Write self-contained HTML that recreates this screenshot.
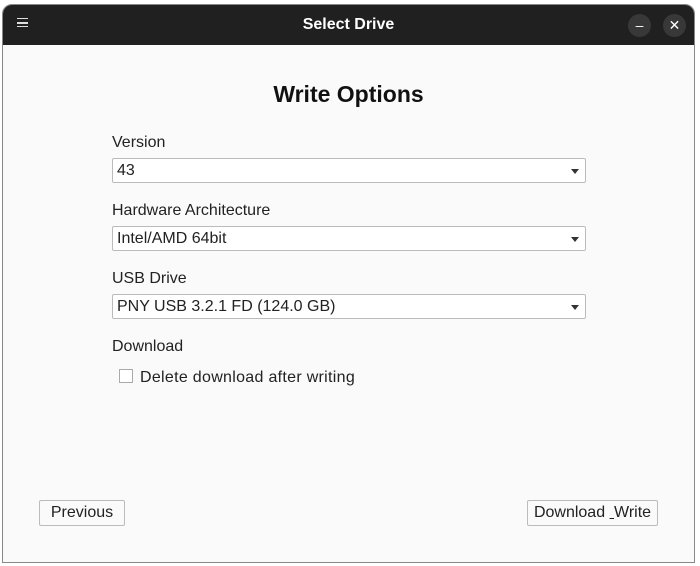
<!DOCTYPE html>
<html><head><style>
body{margin:0;width:700px;height:566px;background:#fff;font-family:"Liberation Sans",sans-serif;position:relative;overflow:hidden}
.win{position:absolute;left:2px;top:4px;width:693px;height:559px;border:1px solid #888;border-radius:10px 10px 0 0;background:#fafafa;box-sizing:border-box;overflow:hidden}
.tb{position:absolute;left:0;top:0;right:0;height:40px;background:#202020;color:#fff}
.t{position:absolute;width:100%;text-align:center;top:11px;font-size:16px;font-weight:bold}
.cb{position:absolute;top:9px;width:23px;height:23px;border-radius:50%;background:#383838;color:#fff;text-align:center;font-size:14px;line-height:23px}
.a{position:absolute;font-size:16px;color:#222}
.combo{position:absolute;left:109px;width:474px;height:25px;border:1px solid #bbb;border-radius:2px;background:#fff;box-sizing:border-box;font-size:16px;line-height:23px;padding-left:4px;color:#222}
.combo:after{content:"";position:absolute;right:6px;top:10px;border-left:4px solid transparent;border-right:4px solid transparent;border-top:5px solid #333}
.btn{position:absolute;height:26px;border:1px solid #bbb;border-radius:2px;background:#fafafa;box-sizing:border-box;font-size:16px;line-height:24px;text-align:center;color:#222}
</style></head><body>
<div class="win">
<div class="tb">
<div style="position:absolute;left:14px;top:13px;width:11px;height:9px;border-top:1.5px solid #ddd;border-bottom:1.5px solid #ddd;box-sizing:border-box"></div>
<div style="position:absolute;left:14px;top:17px;width:11px;height:1.5px;background:#ddd"></div>
<div class="t">Select Drive</div>
<div class="cb" style="left:625px">–</div>
<div class="cb" style="left:660px">✕</div>
</div>
<div class="a" style="left:0;width:100%;text-align:center;top:76px;font-size:23px;font-weight:bold;color:#111">Write Options</div>
<div class="a" style="left:109px;top:129px">Version</div>
<div class="combo" style="top:153px">43</div>
<div class="a" style="left:109px;top:197px">Hardware Architecture</div>
<div class="combo" style="top:221px">Intel/AMD 64bit</div>
<div class="a" style="left:109px;top:265px">USB Drive</div>
<div class="combo" style="top:289px">PNY USB 3.2.1 FD (124.0 GB)</div>
<div class="a" style="left:109px;top:333px">Download</div>
<div style="position:absolute;left:116px;top:364px;width:14px;height:14px;border:1px solid #aaa;background:#fff;box-sizing:border-box"></div>
<div class="a" style="left:137px;top:364px;letter-spacing:0.3px">Delete download after writing</div>
<div class="btn" style="left:36px;top:495px;width:86px">Previous</div>
<div class="btn" style="left:524px;top:495px;width:131px">Download <u>&nbsp;</u>Write</div>
</div>
</body></html>
